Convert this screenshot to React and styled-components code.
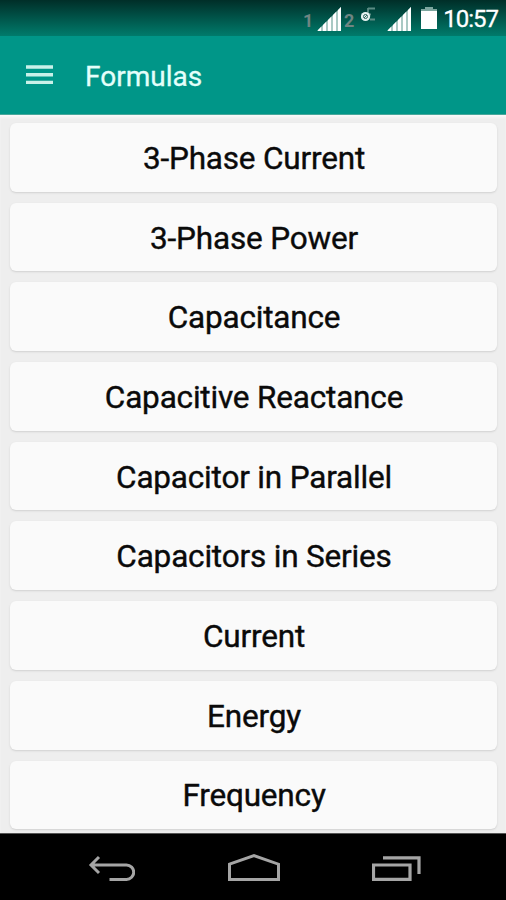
import React from "react";
import styled, { createGlobalStyle } from "styled-components";

const formulas = [
  "3-Phase Current",
  "3-Phase Power",
  "Capacitance",
  "Capacitive Reactance",
  "Capacitor in Parallel",
  "Capacitors in Series",
  "Current",
  "Energy",
  "Frequency",
];

function Signal() {
  return (
    <svg width="24" height="24" viewBox="0 0 24 24">
      <path d="M0 24 24 0V24Z" fill="#a9c9c4" />
      <path
        d="M1 24V23L4 20V24ZM6 24V18L9 15V24ZM11 24V13L14 10V24ZM16 24V8L19 5V24ZM21 24V3L24 0V24Z"
        fill="#fff"
      />
    </svg>
  );
}

export default function App() {
  return (
    <Screen>
      <GlobalStyle />
      <StatusBar>
        <Sim>1</Sim>
        <Signal />
        <Sim $second>2</Sim>
        <DataIcon width="16" height="18" viewBox="0 0 16 18">
          <path
            d="M7 1.5H14M7 1V12M7 7.5H10M9 12.5H14"
            fill="none"
            stroke="#5c8c84"
            strokeWidth="1.8"
          />
          <circle cx="4.5" cy="9.5" r="4.6" fill="#e5f2f0" />
          <circle cx="4.5" cy="9.5" r="2" fill="none" stroke="#31665e" />
          <path d="M3 11 6 8" stroke="#31665e" />
        </DataIcon>
        <Signal />
        <Battery width="16" height="22" viewBox="0 0 16 22">
          <path d="M4 0H12V2H16V22H0V2H4Z" fill="#fff" />
          <path d="M4 0H12V2H16V4H0V2H4Z" fill="#7da69f" />
        </Battery>
        <Clock>10:57</Clock>
      </StatusBar>
      <AppBar>
        <MenuButton aria-label="Menu">
          <svg width="27" height="20" viewBox="0 0 27 20">
            <path
              d="M0 2H27M0 9.7H27M0 17.4H27"
              stroke="#c9f1e9"
              strokeWidth="3.4"
            />
          </svg>
        </MenuButton>
        <Title>Formulas</Title>
      </AppBar>
      <List>
        {formulas.map((name) => (
          <Card key={name}>{name}</Card>
        ))}
      </List>
      <NavBar>
        <NavButton aria-label="Back">
          <svg width="48" height="30" viewBox="0 0 48 30">
            <path
              d="M12 3 4 11 12 19M4 11H39.5A7.2 7.2 0 0 1 39.5 25.4H22.5"
              fill="none"
              stroke="#a5a5a5"
              strokeWidth="3"
            />
          </svg>
        </NavButton>
        <NavButton aria-label="Home">
          <svg width="54" height="30" viewBox="0 0 54 30">
            <path
              d="M2.5 10.2 27 1.6 51.5 10.2V25.4H2.5Z"
              fill="none"
              stroke="#a5a5a5"
              strokeWidth="3"
            />
          </svg>
        </NavButton>
        <NavButton aria-label="Recent apps">
          <svg width="50" height="30" viewBox="0 0 50 30">
            <path
              d="M1.5 11H38V25.4H1.5ZM11 3.8H47V20"
              fill="none"
              stroke="#a5a5a5"
              strokeWidth="3.2"
            />
          </svg>
        </NavButton>
      </NavBar>
    </Screen>
  );
}

const GlobalStyle = createGlobalStyle`
  body {
    margin: 0;
    font-family: Roboto, sans-serif;
  }
  * {
    box-sizing: border-box;
  }
`;

const Screen = styled.div`
  display: flex;
  flex-direction: column;
  width: 506px;
  height: 900px;
  overflow: hidden;
  background: #eee;
`;

const StatusBar = styled.div`
  display: flex;
  flex: none;
  align-items: flex-start;
  height: 36px;
  padding: 6.5px 8px 0 303px;
  background: linear-gradient(#002e28, #007b6b);
  svg {
    flex: none;
  }
`;

const Sim = styled.span`
  flex: none;
  width: ${(p) => (p.$second ? 20 : 14)}px;
  padding: 5px 0 0 ${(p) => (p.$second ? 3 : 0)}px;
  color: #6f8582;
  font-size: 18px;
  font-weight: 700;
  line-height: 18px;
`;

const DataIcon = styled.svg`
  margin-right: 10px;
`;

const Battery = styled.svg`
  margin-left: 10px;
`;

const Clock = styled.span`
  margin: 0 0 0 auto;
  color: #fff;
  font-size: 24px;
  line-height: 24px;
  letter-spacing: -1px;
  -webkit-text-stroke: 0.3px #fff;
`;

const AppBar = styled.header`
  display: flex;
  flex: none;
  align-items: center;
  height: 79px;
  padding: 0 26px;
  background: #009688;
  border-bottom: 1px solid #48a79b;
`;

const MenuButton = styled.button`
  display: flex;
  padding: 0;
  border: 0;
  background: none;
`;

const Title = styled.h1`
  margin: 4px 0 0 32px;
  color: #e4fffa;
  font-size: 28px;
  font-weight: 400;
  line-height: 32px;
  -webkit-text-stroke: 0.3px #e4fffa;
`;

const List = styled.main`
  display: flex;
  flex: 1;
  flex-direction: column;
  gap: 11px;
  min-height: 0;
  padding: 8px 9px 0 10px;
  overflow: hidden;
  box-shadow: inset 0 3px 3px -1px #fafafa;
`;

const Card = styled.div`
  display: flex;
  flex: none;
  align-items: center;
  justify-content: center;
  height: 68.7px;
  padding: 2px 0 0 1px;
  border-radius: 6px;
  background: #fafafa;
  box-shadow: 0 1px 2px #d0d0d0;
  color: #0a0a0a;
  font-size: 31.5px;
  letter-spacing: -0.18px;
  -webkit-text-stroke: 0.4px #0a0a0a;
`;

const NavBar = styled.nav`
  display: flex;
  flex: none;
  align-items: center;
  justify-content: space-between;
  height: 67px;
  padding: 4px 84px 0 87px;
  border-top: 1px solid #555;
  background: #000;
`;

const NavButton = styled.button`
  display: flex;
  padding: 0;
  border: 0;
  background: none;
`;
